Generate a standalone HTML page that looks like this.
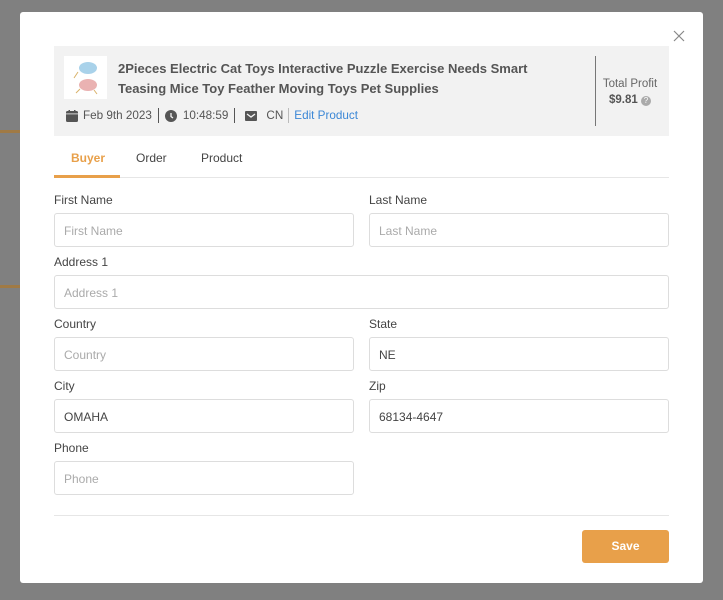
<!DOCTYPE html>
<html><head><style>
*{box-sizing:border-box;margin:0;padding:0}
body{width:723px;height:600px;background:#808080;font-family:"Liberation Sans",sans-serif;position:relative;overflow:hidden;color:#333}
.bgl{position:absolute;background:#8a8a8a}
.modal{position:absolute;left:20px;top:12px;width:683px;height:571px;background:#fff;border-radius:3px}
.x{position:absolute;left:653px;top:17px}
.hdr{position:absolute;left:34px;top:34px;width:615px;height:90px;background:#f2f2f2}
.thumb{position:absolute;left:10px;top:10px;width:43px;height:43px;background:#fff}
.title{position:absolute;left:64px;top:13px;font-size:13px;line-height:20px;color:#555;font-weight:bold;width:440px}
.meta{position:absolute;left:12px;top:62px;font-size:11.7px;color:#555;display:flex;align-items:center;white-space:nowrap}
.sep{display:inline-block;width:1px;height:15px;background:#555;margin:0 6px}
.vl{position:absolute;left:541px;top:10px;width:1px;height:70px;background:#777}
.tp{position:absolute;left:545px;top:30px;width:62px;text-align:center;font-size:11.5px;color:#666;line-height:16px}
.tabs{position:absolute;left:34px;top:133px;width:615px;height:33px;border-bottom:1px solid #e6e6e6;font-size:12px;color:#444}
.tab{position:absolute;top:6px}
.ul{position:absolute;left:0;bottom:-1px;width:66px;height:3px;background:#e8a04a}
.lab{position:absolute;font-size:12px;color:#444}
.in{position:absolute;width:300px;height:34px;border:1px solid #ddd;border-radius:3px;font-size:12px;color:#aaa;padding:10px 9px}
.in.v{color:#444}
.hr{position:absolute;left:34px;top:503px;width:615px;height:1px;background:#e6e6e6}
.save{position:absolute;left:562px;top:518px;width:87px;height:33px;background:#e8a04a;color:#fff;font-weight:bold;font-size:12px;text-align:center;line-height:33px;border-radius:3px}
</style></head><body>
<div class="bgl" style="left:0;top:130px;width:20px;height:3px;background:#a07a45"></div>
<div class="bgl" style="left:0;top:285px;width:20px;height:3px;background:#a07a45"></div>
<div class="modal">
<div class="x"><svg width="12" height="12"><path d="M1 1L11 11M11 1L1 11" stroke="#888" stroke-width="1.2"/></svg></div>
<div class="hdr">
<div class="thumb"><svg width="43" height="43"><ellipse cx="24" cy="12" rx="9" ry="6" fill="#a9d2ea"/><ellipse cx="24" cy="29" rx="9" ry="6" fill="#eab2b2"/><path d="M14 16l-4 6M16 33l-4 4M30 34l3 4" stroke="#d9b36a" stroke-width="1"/></svg></div>
<div class="title">2Pieces Electric Cat Toys Interactive Puzzle Exercise Needs Smart Teasing Mice Toy Feather Moving Toys Pet Supplies</div>
<div class="meta">
<svg width="12" height="12"><rect x="0" y="1" width="12" height="11" rx="1.5" fill="#555"/><rect x="2.5" y="0" width="1.5" height="3" fill="#555"/><rect x="8" y="0" width="1.5" height="3" fill="#555"/><rect x="0" y="3.5" width="12" height="0.8" fill="#f2f2f2"/></svg>
<span style="margin-left:5px">Feb 9th 2023</span><span class="sep"></span>
<svg width="12" height="12"><circle cx="6" cy="6" r="6" fill="#555"/><path d="M6 3v3.5l2 1.5" stroke="#f2f2f2" stroke-width="1.3" fill="none"/></svg>
<span style="margin-left:6px">10:48:59</span><span class="sep"></span>
<svg width="12" height="10" style="margin-left:4px"><rect width="12" height="10" rx="1" fill="#555"/><path d="M2 3l4 3 4-3" stroke="#f2f2f2" stroke-width="1.3" fill="none"/></svg>
<span style="margin-left:9px">CN</span><span class="sep" style="background:#bbb;margin:0 5px"></span><span style="color:#3b87d6">Edit Product</span>
</div>
<div class="vl"></div>
<div class="tp">Total Profit<br><b style="color:#555">$9.81</b> <span style="display:inline-block;width:10px;height:10px;border-radius:50%;background:#aaa;color:#fff;font-size:8px;line-height:10px">?</span></div>
</div>
<div class="tabs">
<div class="tab" style="left:17px;color:#e8a04a;font-weight:bold">Buyer</div>
<div class="tab" style="left:82px">Order</div>
<div class="tab" style="left:147px">Product</div>
<div class="ul"></div>
</div>
<div class="lab" style="left:34px;top:181px">First Name</div>
<div class="lab" style="left:349px;top:181px">Last Name</div>
<div class="in" style="left:34px;top:201px">First Name</div>
<div class="in" style="left:349px;top:201px">Last Name</div>
<div class="lab" style="left:34px;top:243px">Address 1</div>
<div class="in" style="left:34px;top:263px;width:615px">Address 1</div>
<div class="lab" style="left:34px;top:305px">Country</div>
<div class="lab" style="left:349px;top:305px">State</div>
<div class="in" style="left:34px;top:325px">Country</div>
<div class="in v" style="left:349px;top:325px">NE</div>
<div class="lab" style="left:34px;top:367px">City</div>
<div class="lab" style="left:349px;top:367px">Zip</div>
<div class="in v" style="left:34px;top:387px">OMAHA</div>
<div class="in v" style="left:349px;top:387px">68134-4647</div>
<div class="lab" style="left:34px;top:429px">Phone</div>
<div class="in" style="left:34px;top:449px">Phone</div>
<div class="hr"></div>
<div class="save">Save</div>
</div>
</body></html>
